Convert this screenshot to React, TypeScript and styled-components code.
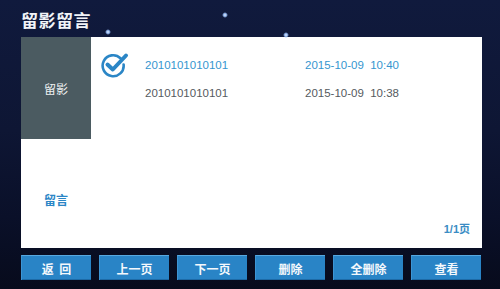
import React from 'react';
import styled, { createGlobalStyle } from 'styled-components';

const GlobalStyle = createGlobalStyle`
  html, body {
    margin: 0;
    padding: 0;
    width: 500px;
    height: 289px;
    overflow: hidden;
    background: #0d1433;
  }
`;

const Screen = styled.div`
  position: relative;
  width: 500px;
  height: 289px;
  box-sizing: border-box;
  padding: 0 18px 0 21px;
  background: linear-gradient(180deg, #101a3d 0%, #0e1634 45%, #0a1029 75%, #070b1c 100%);
  font-family: "Liberation Sans", "Noto Sans CJK SC", sans-serif;
  display: flex;
  flex-direction: column;
`;

const Star = styled.span<{ $x: number; $y: number }>`
  position: absolute;
  left: ${p => p.$x - 3}px;
  top: ${p => p.$y - 3}px;
  width: 6px;
  height: 6px;
  border-radius: 50%;
  background: radial-gradient(circle, #e6f0ff 0%, #8fb2ea 35%, rgba(80, 120, 200, 0) 70%);
`;

const Title = styled.h1`
  margin: 0;
  height: 37px;
  box-sizing: border-box;
  padding-top: 7px;
  font-size: 17px;
  font-weight: bold;
  color: #f2f4f8;
  letter-spacing: 0.5px;
  font-family: "Noto Sans CJK SC", sans-serif;
`;

const Panel = styled.div`
  width: 461px;
  height: 211px;
  background: #fff;
  display: flex;
`;

const Sidebar = styled.div`
  width: 70px;
  display: flex;
  flex-direction: column;
`;

const Tab = styled.div<{ $active?: boolean }>`
  height: ${p => (p.$active ? '102px' : '109px')};
  box-sizing: border-box;
  padding-top: ${p => (p.$active ? '0' : '11px')};
  display: flex;
  align-items: center;
  justify-content: center;
  background: ${p => (p.$active ? '#4b5b61' : 'transparent')};
  color: ${p => (p.$active ? '#eef1f2' : '#2b86c6')};
  font-size: 12px;
  font-weight: ${p => (p.$active ? 'normal' : 'bold')};
  font-family: "Noto Sans CJK SC", sans-serif;
`;

const Content = styled.div`
  flex: 1;
  position: relative;
  padding: 14px 0 0 10px;
`;

const Row = styled.div<{ $selected?: boolean }>`
  display: flex;
  align-items: center;
  height: 28px;
  font-size: 11.5px;
  color: ${p => (p.$selected ? '#3596cf' : '#555a5e')};
`;

const CheckSlot = styled.div`
  width: 44px;
  height: 28px;
  display: flex;
  align-items: center;
`;

const Code = styled.span`
  width: 160px;
`;

const Time = styled.span`
  white-space: pre;
`;

const Pager = styled.div`
  position: absolute;
  right: 12px;
  bottom: 12px;
  font-size: 11px;
  font-weight: bold;
  color: #3a8cc4;
  font-family: "Liberation Sans", "Noto Sans CJK SC", sans-serif;
`;

const Buttons = styled.div`
  margin-top: 7px;
  display: flex;
  gap: 8px;
`;

const Button = styled.button`
  width: 70px;
  height: 25px;
  padding: 0;
  border: none;
  border-top: 1px solid #58a9e0;
  border-left: 1px solid #3d95d4;
  background: #2984c6;
  box-shadow: inset 0 -1px 0 #1d6aa6;
  color: #f4f8fc;
  font-size: 12px;
  font-weight: bold;
  font-family: "Noto Sans CJK SC", sans-serif;
  white-space: pre;
`;

function CheckIcon() {
  return (
    <svg width="30" height="28" viewBox="0 0 30 28">
      <path
        d="M19.5 7.2 A10.5 10.5 0 1 0 22.6 13.5"
        fill="none"
        stroke="#2b86c6"
        strokeWidth="2.6"
        strokeLinecap="round"
      />
      <path
        d="M6.5 13.5 L11.8 18.5 L25 4.5"
        fill="none"
        stroke="#2b86c6"
        strokeWidth="4"
        strokeLinecap="round"
        strokeLinejoin="round"
      />
    </svg>
  );
}

const records = [
  { code: '2010101010101', time: '2015-10-09  10:40', selected: true },
  { code: '2010101010101', time: '2015-10-09  10:38', selected: false },
];

const actions = ['返  回', '上一页', '下一页', '删除', '全删除', '查看'];

export default function App() {
  return (
    <>
      <GlobalStyle />
      <Screen>
        <Star $x={225} $y={15} />
        <Star $x={108} $y={32} />
        <Star $x={286} $y={35} />
        <Title>留影留言</Title>
        <Panel>
          <Sidebar>
            <Tab $active>留影</Tab>
            <Tab>留言</Tab>
          </Sidebar>
          <Content>
            {records.map((r, i) => (
              <Row key={i} $selected={r.selected}>
                <CheckSlot>{r.selected && <CheckIcon />}</CheckSlot>
                <Code>{r.code}</Code>
                <Time>{r.time}</Time>
              </Row>
            ))}
            <Pager>1/1页</Pager>
          </Content>
        </Panel>
        <Buttons>
          {actions.map(a => (
            <Button key={a}>{a}</Button>
          ))}
        </Buttons>
      </Screen>
    </>
  );
}
